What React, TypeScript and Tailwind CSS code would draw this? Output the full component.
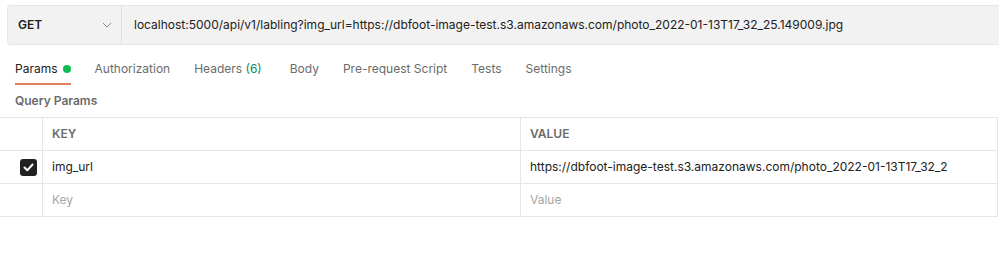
import React from "react";

export default function App() {
  const tabs = [
    { label: "Authorization" },
    { label: "Headers", count: "(6)" },
    { label: "Body", extra: true },
    { label: "Pre-request Script" },
    { label: "Tests" },
    { label: "Settings" },
  ];
  return (
    <div
      className="w-[999px] h-[271px] bg-white overflow-hidden text-[12px] text-[#212121]"
      style={{ fontFamily: "Inter, 'Noto Sans', sans-serif" }}
    >
      <div className="pt-[5px] pl-[7px]">
        <div className="flex h-[40px] bg-[#f2f2f2] border border-[#e6e6e6] rounded-l-[4px] border-r-0">
          <div className="w-[114px] flex items-center justify-between pl-[10px] pr-[9px] border-r border-[#e0e0e0]">
            <span className="font-semibold text-[12px] text-[#212121]">GET</span>
            <svg width="10" height="6" viewBox="0 0 10 6" fill="none">
              <path d="M1 1l4 4 4-4" stroke="#8a8a8a" strokeWidth="1" />
            </svg>
          </div>
          <div className="flex items-center pl-[12px] text-[#212121] whitespace-nowrap">
            localhost:5000/api/v1/labling?img_url=https://dbfoot-image-test.s3.amazonaws.com/photo_2022-01-13T17_32_25.149009.jpg
          </div>
        </div>
      </div>

      <div className="flex items-end h-[40px] pl-[15px] gap-[24px]">
        <div className="flex flex-col">
          <div className="flex items-center gap-[5px] text-[#212121]">
            <span>Params</span>
            <span className="w-[8px] h-[8px] rounded-full bg-[#0cbb52]" />
          </div>
          <div className="h-[2px] mt-[5px] bg-[#e0805a]" />
        </div>
        {tabs.map((t) => (
          <div key={t.label} className={t.extra ? "flex flex-col ml-[4px]" : "flex flex-col"}>
            <div className="text-[#6b6b6b] whitespace-nowrap">
              {t.label}
              {t.count && <span className="text-[#0c8c5d]"> {t.count}</span>}
            </div>
            <div className="h-[2px] mt-[5px]" />
          </div>
        ))}
      </div>

      <div className="pl-[15px] pt-[7px] h-[32px] text-[12px] font-semibold text-[#6b6b6b]">
        Query Params
      </div>

      <div className="w-[999px] pr-[1px]">
        <div className="border-t border-r border-[#e6e6e6]">
          <div className="flex h-[33px] border-b border-[#e6e6e6]">
            <div className="w-[43px] border-r border-[#e6e6e6]" />
            <div className="w-[478px] border-r border-[#e6e6e6] flex items-center pl-[9px] text-[12px] font-semibold text-[#6b6b6b]">
              KEY
            </div>
            <div className="flex-1 flex items-center pl-[9px] text-[12px] font-semibold text-[#6b6b6b]">
              VALUE
            </div>
          </div>
          <div className="flex h-[33px] border-b border-[#e6e6e6]">
            <div className="w-[43px] border-r border-[#e6e6e6] flex items-center justify-end pr-[5px]">
              <div className="w-[17px] h-[17px] rounded-[3px] bg-[#212121] flex items-center justify-center">
                <svg width="11" height="9" viewBox="0 0 11 9" fill="none">
                  <path d="M1.5 4.5l2.8 2.8L9.5 1.5" stroke="#ffffff" strokeWidth="2" strokeLinecap="round" strokeLinejoin="round" />
                </svg>
              </div>
            </div>
            <div className="w-[478px] border-r border-[#e6e6e6] flex items-center pl-[9px] text-[#212121]">
              img_url
            </div>
            <div className="flex-1 flex items-center pl-[9px] text-[#212121] whitespace-nowrap overflow-hidden">
              https://dbfoot-image-test.s3.amazonaws.com/photo_2022-01-13T17_32_2
            </div>
          </div>
          <div className="flex h-[33px] border-b border-[#e6e6e6]">
            <div className="w-[43px] border-r border-[#e6e6e6]" />
            <div className="w-[478px] border-r border-[#e6e6e6] flex items-center pl-[9px] text-[#a6a6a6]">
              Key
            </div>
            <div className="flex-1 flex items-center pl-[9px] text-[#a6a6a6]">Value</div>
          </div>
        </div>
      </div>
    </div>
  );
}
